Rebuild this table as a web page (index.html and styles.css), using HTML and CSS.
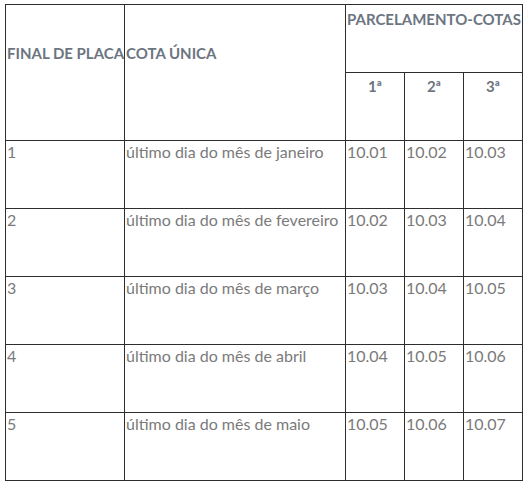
FILE: index.html
```html
<!DOCTYPE html>
<html lang="pt">
<head>
<meta charset="utf-8">
<link rel="stylesheet" href="styles.css">
</head>
<body>
<table class="cotas">
  <colgroup>
    <col class="c-placa">
    <col class="c-unica">
    <col class="c-parc">
    <col class="c-parc">
    <col class="c-parc">
  </colgroup>
  <thead>
    <tr class="h1">
      <th rowspan="2" class="th-placa">FINAL DE PLACA</th>
      <th rowspan="2" class="th-unica">COTA ÚNICA</th>
      <th colspan="3" class="th-parc">PARCELAMENTO-COTAS</th>
    </tr>
    <tr class="h2">
      <th class="th-n">1ª</th>
      <th class="th-n">2ª</th>
      <th class="th-n">3ª</th>
    </tr>
  </thead>
  <tbody>
    <tr><td>1</td><td>último dia do mês de janeiro</td><td>10.01</td><td>10.02</td><td>10.03</td></tr>
    <tr><td>2</td><td>último dia do mês de fevereiro</td><td>10.02</td><td>10.03</td><td>10.04</td></tr>
    <tr><td>3</td><td>último dia do mês de março</td><td>10.03</td><td>10.04</td><td>10.05</td></tr>
    <tr><td>4</td><td>último dia do mês de abril</td><td>10.04</td><td>10.05</td><td>10.06</td></tr>
    <tr><td>5</td><td>último dia do mês de maio</td><td>10.05</td><td>10.06</td><td>10.07</td></tr>
  </tbody>
</table>
</body>
</html>
```
FILE: styles.css
```css
html, body {
  margin: 0;
  padding: 0;
  background: #ffffff;
}
body {
  padding: 4px 0 0 5px;
  font-family: Lato, "Liberation Sans", sans-serif;
  font-size: 16px;
  color: #7a7a7a;
}
.cotas {
  border-collapse: collapse;
  table-layout: fixed;
  width: 518px;
}
.c-placa { width: 119px; }
.c-unica { width: 221px; }
.c-parc { width: 59px; }
.cotas th,
.cotas td {
  border: 1px solid #2e2e2e;
  padding: 0 1px;
  vertical-align: top;
  white-space: nowrap;
  overflow: visible;
}
.cotas th {
  font-size: 15px;
  line-height: 20px;
  font-weight: 700;
  color: #6c7580;
  text-align: left;
}
.th-parc {
  height: 63px;
  padding-top: 4px !important;
}
.th-n {
  height: 64px;
  text-align: center !important;
  padding-top: 3px !important;
}
.th-placa,
.th-unica {
  padding-top: 38px !important;
}
.cotas td {
  height: 66px;
  line-height: 20px;
  padding-top: 1px;
}
```
